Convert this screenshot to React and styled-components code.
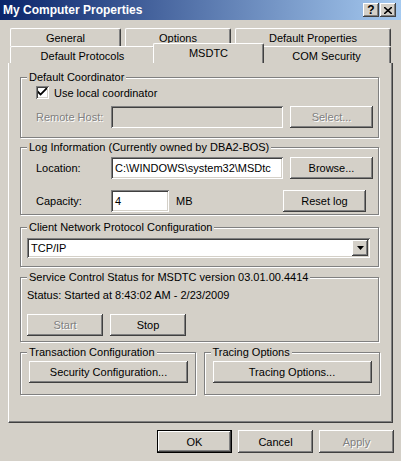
import React from 'react';
import styled, { createGlobalStyle, css } from 'styled-components';

const GlobalStyle = createGlobalStyle`
  html, body {
    margin: 0;
    padding: 0;
    background: #d4d0c8;
  }
  body {
    font-family: 'Liberation Sans', Arial, sans-serif;
    font-size: 11px;
    color: #000;
  }
`;

const raised = css`
  box-shadow: inset -1px -1px 0 #404040, inset 1px 1px 0 #ffffff,
    inset -2px -2px 0 #808080, inset 2px 2px 0 #d4d0c8;
`;

const sunken = css`
  box-shadow: inset 1px 1px 0 #808080, inset -1px -1px 0 #ffffff,
    inset 2px 2px 0 #404040, inset -2px -2px 0 #d4d0c8;
`;

const Window = styled.div`
  width: 401px;
  height: 461px;
  background: #d4d0c8;
  display: flex;
  flex-direction: column;
  overflow: hidden;
`;

const TitleBar = styled.div`
  height: 20px;
  display: flex;
  align-items: center;
  justify-content: space-between;
  padding: 0 5px 0 3px;
  background: linear-gradient(to right, #0a246a, #a6caf0);
`;

const Title = styled.span`
  color: #fff;
  font-weight: bold;
  font-size: 12px;
`;

const CaptionButtons = styled.div`
  display: flex;
  gap: 1px;
`;

const CaptionButton = styled.div`
  width: 16px;
  height: 14px;
  background: #d4d0c8;
  ${raised};
  display: flex;
  align-items: center;
  justify-content: center;
  font-weight: bold;
  font-size: 12px;
  line-height: 1;
`;

const Tabs = styled.div`
  margin-top: 8px;
  padding-left: 10px;
  display: flex;
  flex-direction: column;
`;

const TabRow = styled.div`
  display: flex;
  height: ${(p) => p.$h}px;
  align-items: flex-end;
`;

const Tab = styled.div`
  box-sizing: border-box;
  width: ${(p) => p.$w}px;
  height: ${(p) => p.$h}px;
  margin-right: ${(p) => p.$gap || 0}px;
  border-top: 1px solid #fff;
  border-left: 1px solid #fff;
  border-right: 1px solid #404040;
  box-shadow: inset -1px 0 0 #808080;
  border-radius: 2px 2px 0 0;
  display: flex;
  align-items: center;
  justify-content: center;
  padding-top: 1px;
  ${(p) =>
    p.$active &&
    css`
      margin-left: -2px;
      margin-right: -2px;
      padding-bottom: 3px;
      position: relative;
      z-index: 1;
      background: #d4d0c8;
    `}
`;

const Panel = styled.div`
  box-sizing: border-box;
  width: 385px;
  height: 360px;
  margin-left: 8px;
  border-left: 1px solid #fff;
  border-right: 1px solid #404040;
  border-bottom: 1px solid #404040;
  box-shadow: inset -1px -1px 0 #808080;
  padding: 14px 12px 0 11px;
  display: flex;
  flex-direction: column;
`;

const Group = styled.div`
  box-sizing: border-box;
  width: ${(p) => p.$w || 359}px;
  height: ${(p) => p.$h}px;
  margin-top: ${(p) => p.$mt || 0}px;
  border: 1px solid #808080;
  box-shadow: inset 1px 1px 0 #fff, 1px 1px 0 #fff;
  display: flex;
  flex-direction: column;
`;

const Legend = styled.div`
  align-self: flex-start;
  margin: -7px 0 0 6px;
  padding: 0 2px;
  height: 13px;
  line-height: 13px;
  background: #d4d0c8;
  white-space: nowrap;
`;

const GroupBody = styled.div`
  display: flex;
  flex-direction: column;
  padding-left: ${(p) => p.$pl || 0}px;
`;

const Row = styled.div`
  display: flex;
  align-items: center;
  margin-top: ${(p) => p.$mt || 0}px;
  gap: ${(p) => p.$gap || 0}px;
`;

const Label = styled.span`
  width: ${(p) => p.$w || 'auto'};
  flex: none;
  box-sizing: border-box;
  padding-left: ${(p) => p.$pl || 0}px;
  color: ${(p) => (p.$disabled ? '#808080' : '#000')};
  text-shadow: ${(p) => (p.$disabled ? '1px 1px 0 #fff' : 'none')};
`;

const CheckBox = styled.div`
  width: 13px;
  height: 13px;
  background: #fff;
  ${sunken};
  display: flex;
  align-items: center;
  justify-content: center;
  margin-right: 5px;
`;

const Field = styled.div`
  box-sizing: border-box;
  width: ${(p) => p.$w}px;
  height: ${(p) => p.$h || 22}px;
  flex: none;
  background: ${(p) => (p.$disabled ? '#d4d0c8' : '#fff')};
  ${sunken};
  padding: 0 4px;
  display: flex;
  align-items: center;
  white-space: nowrap;
  overflow: hidden;
`;

const Button = styled.div`
  box-sizing: border-box;
  width: ${(p) => p.$w}px;
  height: ${(p) => p.$h || 22}px;
  flex: none;
  margin-left: ${(p) => p.$ml || 0}px;
  background: #d4d0c8;
  ${raised};
  display: flex;
  align-items: center;
  justify-content: center;
  color: ${(p) => (p.$disabled ? '#808080' : '#000')};
  text-shadow: ${(p) => (p.$disabled ? '1px 1px 0 #fff' : 'none')};
  ${(p) =>
    p.$default &&
    css`
      border: 1px solid #000;
      box-shadow: inset -1px -1px 0 #404040, inset 1px 1px 0 #ffffff,
        inset -2px -2px 0 #808080;
    `}
`;

const ComboArrow = styled.div`
  width: 16px;
  height: 16px;
  margin-left: auto;
  margin-right: -2px;
  background: #d4d0c8;
  ${raised};
  display: flex;
  align-items: center;
  justify-content: center;
`;

const GroupRow = styled.div`
  display: flex;
  gap: 8px;
  margin-top: 10px;
`;

const Footer = styled.div`
  display: flex;
  justify-content: flex-end;
  gap: 6px;
  padding: 7px 7px 0 0;
`;

const Check = () => (
  <svg width="9" height="9" viewBox="0 0 7 7">
    <path d="M0 2 L0 4 L2 6 L7 1 L7 -1 L2 4 Z" fill="#000" />
  </svg>
);

const Arrow = () => (
  <svg width="7" height="4" viewBox="0 0 7 4">
    <path d="M0 0 H7 L3.5 4 Z" fill="#000" />
  </svg>
);

const row1 = [
  { label: 'General', w: 111, gap: 4 },
  { label: 'Options', w: 106, gap: 4 },
  { label: 'Default Properties', w: 156 },
];

const row2 = [
  { label: 'Default Protocols', w: 145 },
  { label: 'MSDTC', w: 111, active: true },
  { label: 'COM Security', w: 129 },
];

const App = () => (
  <Window>
    <GlobalStyle />
    <TitleBar>
      <Title>My Computer Properties</Title>
      <CaptionButtons>
        <CaptionButton>?</CaptionButton>
        <CaptionButton>
          <svg width="8" height="7" viewBox="0 0 8 7">
            <path d="M0 0 L8 7 M8 0 L0 7" stroke="#000" strokeWidth="1.6" />
          </svg>
        </CaptionButton>
      </CaptionButtons>
    </TitleBar>

    <Tabs>
      <TabRow $h={18}>
        {row1.map((t) => (
          <Tab key={t.label} $w={t.w} $h={18} $gap={t.gap}>
            {t.label}
          </Tab>
        ))}
      </TabRow>
      <TabRow $h={17}>
        {row2.map((t) =>
          t.active ? (
            <Tab key={t.label} $w={t.w} $h={20} $active>
              {t.label}
            </Tab>
          ) : (
            <Tab key={t.label} $w={t.w} $h={17}>
              {t.label}
            </Tab>
          )
        )}
      </TabRow>
    </Tabs>

    <Panel>
      <Group $h={61}>
        <Legend>Default Coordinator</Legend>
        <GroupBody $pl={15}>
          <Row $mt={2}>
            <CheckBox>
              <Check />
            </CheckBox>
            <span>Use local coordinator</span>
          </Row>
          <Row $mt={7}>
            <Label $w="75px" $disabled>
              Remote Host:
            </Label>
            <Field $w={172} $disabled />
            <Button $w={83} $ml={7} $disabled>
              Select...
            </Button>
          </Row>
        </GroupBody>
      </Group>

      <Group $h={68} $mt={9}>
        <Legend>Log Information (Currently owned by DBA2-BOS)</Legend>
        <GroupBody $pl={15}>
          <Row $mt={3}>
            <Label $w="75px">Location:</Label>
            <Field $w={172}>C:\WINDOWS\system32\MSDtc</Field>
            <Button $w={83} $ml={7}>
              Browse...
            </Button>
          </Row>
          <Row $mt={11}>
            <Label $w="75px">Capacity:</Label>
            <Field $w={58}>4</Field>
            <Label $w="114px" $pl={7}>
              MB
            </Label>
            <Button $w={83}>Reset log</Button>
          </Row>
        </GroupBody>
      </Group>

      <Group $h={40} $mt={12}>
        <Legend>Client Network Protocol Configuration</Legend>
        <GroupBody $pl={6}>
          <Row $mt={4}>
            <Field $w={343} $h={20}>
              TCP/IP
              <ComboArrow>
                <Arrow />
              </ComboArrow>
            </Field>
          </Row>
        </GroupBody>
      </Group>

      <Group $h={65} $mt={10}>
        <Legend>Service Control Status for MSDTC version 03.01.00.4414</Legend>
        <GroupBody $pl={6}>
          <Row $mt={5}>
            <span>Status: Started at 8:43:02 AM - 2/23/2009</span>
          </Row>
          <Row $mt={13} $gap={7}>
            <Button $w={76} $disabled>
              Start
            </Button>
            <Button $w={76}>Stop</Button>
          </Row>
        </GroupBody>
      </Group>

      <GroupRow>
        <Group $w={176} $h={43}>
          <Legend>Transaction Configuration</Legend>
          <GroupBody $pl={8}>
            <Row $mt={2}>
              <Button $w={159}>Security Configuration...</Button>
            </Row>
          </GroupBody>
        </Group>
        <Group $w={177} $h={43}>
          <Legend>Tracing Options</Legend>
          <GroupBody $pl={8}>
            <Row $mt={2}>
              <Button $w={159}>Tracing Options...</Button>
            </Row>
          </GroupBody>
        </Group>
      </GroupRow>
    </Panel>

    <Footer>
      <Button $w={75} $h={23} $default>
        OK
      </Button>
      <Button $w={75} $h={23}>
        Cancel
      </Button>
      <Button $w={75} $h={23} $disabled>
        Apply
      </Button>
    </Footer>
  </Window>
);

export default App;
